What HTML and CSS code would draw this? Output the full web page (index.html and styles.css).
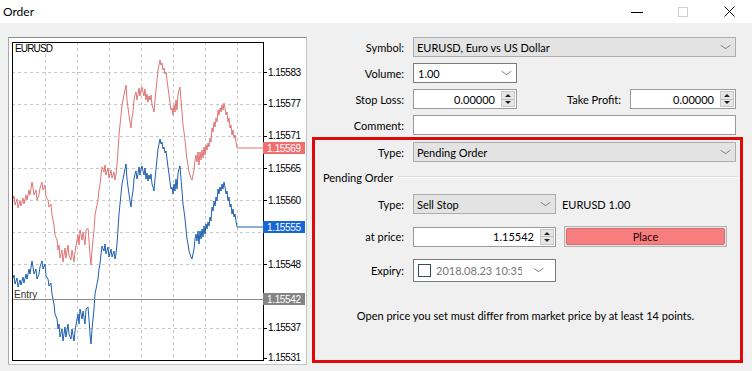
FILE: index.html
```html
<!DOCTYPE html>
<html>
<head>
    <title>Order</title>
    <link rel="stylesheet" href="styles.css">
</head>
<body>

<!-- Window title bar -->
<div class="titleBar">
    <span class="titleText">Order</span>
    <div class="winButtons">
        <span class="winBtn"><svg width="12" height="10" viewBox="0 0 12 10"><path d="M0 5.5 H12" stroke="#000" stroke-width="1"/></svg></span>
        <span class="winBtn"><svg width="10" height="10" viewBox="0 0 10 10"><rect x="0.5" y="0.5" width="9" height="9" fill="none" stroke="#cfcfcf"/></svg></span>
        <span class="winBtn"><svg width="11" height="11" viewBox="0 0 11 11"><path d="M0.5 0.5 L10.5 10.5 M10.5 0.5 L0.5 10.5" stroke="#000" stroke-width="1"/></svg></span>
    </div>
</div>

<div class="main">

    <!-- Tick chart -->
    <div class="chartPanel">
        <svg class="chart" width="297" height="326" viewBox="9 38 297 326">
            <defs>
                <clipPath id="plotArea"><rect x="12" y="42" width="251" height="318"/></clipPath>
                <polyline id="tickPath" fill="none" points="12,202 14,196 15,205 17,199 18,208 20,201 21,206 23,198 24,204 26,195 27,200 29,190 30,195 32,182 33,188 34,195 36,190 37,200 39,195 40,188 42,182 43,190 45,185 46,197 48,200 49,207 51,204 52,215 54,225 55,235 57,240 58,250 59,245 60,258 62,250 63,262 65,248 66,258 68,245 69,255 71,260 72,250 74,262 75,252 77,240 78,235 79,245 80,230 82,240 83,232 85,245 86,230 88,228 89,240 90,255 91,265 92,250 94,230 95,215 97,205 98,200 99,190 100,185 101,175 102,167 104,172 105,165 106,175 108,168 109,178 111,170 112,178 114,172 115,180 116,175 117,165 118,150 119,135 120,125 121,115 122,105 124,95 125,90 126,85 127,100 128,108 129,115 130,122 131,128 132,118 133,112 134,100 135,95 136,92 137,100 138,95 139,88 140,96 141,90 142,87 143,92 144,96 145,89 146,100 147,94 148,102 149,96 150,100 151,95 152,105 153,108 154,112 155,100 156,90 157,80 158,70 159,65 160,60 161,65 162,63 163,70 164,68 165,74 166,72 167,80 168,88 169,95 170,103 171,110 172,108 173,115 174,105 175,112 176,100 177,110 178,95 179,90 180,87 181,100 182,112 183,125 184,132 185,140 186,150 187,160 188,165 189,172 190,175 191,178 192,180 193,175 194,170 195,160 196,155 197,162 198,152 199,165 200,152 201,160 202,150 203,158 204,147 205,155 206,145 207,150 208,143 209,147 210,138 211,142 212,128 213,132 214,122 215,127 216,118 217,122 218,110 219,115 220,108 221,112 222,105 223,110 224,103 225,108 226,115 227,112 228,122 229,118 230,128 231,125 232,135 233,130 234,138 235,135 236,142 237,148 263,148"/>
            </defs>

            <!-- grid -->
            <g class="grid">
                <path d="M12 72.5 H263 M12 104.5 H263 M12 136.5 H263 M12 168.5 H263 M12 200.5 H263 M12 232.5 H263 M12 264.5 H263 M12 328.5 H263"/>
                <path d="M45.5 42 V360 M77.5 42 V360 M109.5 42 V360 M141.5 42 V360 M173.5 42 V360 M205.5 42 V360 M237.5 42 V360"/>
            </g>

            <!-- price lines -->
            <g clip-path="url(#plotArea)">
                <use href="#tickPath" class="askLine"/>
                <use href="#tickPath" class="bidLine" transform="translate(0,79)"/>
            </g>

            <!-- entry level -->
            <path class="entryLine" d="M12 299.5 H263"/>
            <text class="entryText" x="14" y="298">Entry</text>

            <rect class="frame" x="12.5" y="42.5" width="251" height="318"/>
            <text class="symbolText" x="15" y="52" textLength="38">EURUSD</text>

            <!-- price scale -->
            <path class="ticks" d="M263 72.5 h4 M263 104.5 h4 M263 136.5 h4 M263 168.5 h4 M263 200.5 h4 M263 232.5 h4 M263 264.5 h4 M263 328.5 h4 M263 358.5 h4"/>
            <g class="scaleText">
                <text x="268" y="76" textLength="33">1.15583</text>
                <text x="268" y="107" textLength="33">1.15577</text>
                <text x="268" y="139" textLength="33">1.15571</text>
                <text x="268" y="172" textLength="33">1.15565</text>
                <text x="268" y="204" textLength="33">1.15560</text>
                <text x="268" y="268" textLength="33">1.15548</text>
                <text x="268" y="331" textLength="33">1.15537</text>
                <text x="268" y="361" textLength="33">1.15531</text>
            </g>
            <rect class="askTag" x="263" y="142" width="42" height="12"/>
            <text class="tagText" x="267" y="152" textLength="34">1.15569</text>
            <rect class="bidTag" x="263" y="221" width="42" height="12"/>
            <text class="tagText" x="267" y="231" textLength="34">1.15555</text>
            <rect class="entryTag" x="263" y="293" width="42" height="12"/>
            <text class="tagText" x="267" y="303" textLength="34">1.15542</text>
        </svg>
    </div>

    <!-- Order form -->
    <div class="orderForm">
        <div class="row">
            <span class="lbl">Symbol:</span>
            <div class="combo greyCombo fullWidth"><span class="comboText">EURUSD, Euro vs US Dollar</span><span class="chev"></span></div>
        </div>
        <div class="row">
            <span class="lbl">Volume:</span>
            <div class="combo whiteCombo shortWidth"><span class="comboText volText">1.00</span><span class="chev"></span></div>
        </div>
        <div class="row">
            <span class="lbl">Stop Loss:</span>
            <div class="spinField shortWidth"><span class="spinValue">0.00000</span><span class="spinner"></span></div>
            <span class="lbl fillLbl">Take Profit:</span>
            <div class="spinField profitWidth"><span class="spinValue">0.00000</span><span class="spinner"></span></div>
        </div>
        <div class="row commentRow">
            <span class="lbl">Comment:</span>
            <div class="textBox fullWidth"></div>
        </div>

        <!-- highlighted pending order part -->
        <div class="pendingBox">
            <div class="row">
                <span class="lbl">Type:</span>
                <div class="combo greyCombo fullWidth"><span class="comboText">Pending Order</span><span class="chev"></span></div>
            </div>
            <div class="groupHead">
                <span>Pending Order</span>
                <span class="groupLine"></span>
            </div>
            <div class="row sellRow">
                <span class="lbl">Type:</span>
                <div class="combo greyCombo midWidth"><span class="comboText">Sell Stop</span><span class="chev"></span></div>
                <span class="symbolInfo">EURUSD 1.00</span>
            </div>
            <div class="row priceRow">
                <span class="lbl">at price:</span>
                <div class="spinField midWidth"><span class="spinValue">1.15542</span><span class="spinner"></span></div>
                <button class="placeButton"><span>Place</span></button>
            </div>
            <div class="row expiryRow">
                <span class="lbl">Expiry:</span>
                <div class="dateBox midWidth">
                    <span class="checkBox"></span>
                    <span class="dateText">2018.08.23 10:35</span>
                    <span class="chev"></span>
                </div>
            </div>
            <p class="notice">Open price you set must differ from market price by at least 14 points.</p>
        </div>
    </div>
</div>

</body>
</html>
```

FILE: styles.css
```css
/* General Styles */
body {
    margin: 0;
    width: 752px;
    height: 371px;
    overflow: hidden;
    background-color: #f0f0f0;
    font-family: Lato, "Open Sans", sans-serif;
    font-size: 11px;
    color: #000;
}

/* Title Bar */
.titleBar {
    height: 23px;
    background-color: #fff;
    display: flex;
    align-items: center;
}

.titleText {
    padding-left: 3px;
    font-size: 12px;
}

.winButtons {
    margin-left: auto;
    display: flex;
    height: 23px;
}

.winBtn {
    width: 46px;
    display: flex;
    align-items: center;
    justify-content: center;
}

.main {
    display: flex;
    align-items: flex-start;
    padding: 14px 0 0 8px;
}

/* Chart */
.chartPanel {
    width: 297px;
    height: 326px;
    background-color: #fff;
    border: 1px solid #c4c4c4;
    border-top-color: #8c8c8c;
    border-left-color: #a8a8a8;
}

.chart {
    display: block;
    font-family: "Liberation Sans", Arial, sans-serif;
}

.grid path {
    stroke: #c8c8c8;
    stroke-width: 1;
    stroke-dasharray: 3 3;
    fill: none;
}

.askLine {
    stroke: #e07575;
    stroke-width: 1;
}

.bidLine {
    stroke: #1d5fae;
    stroke-width: 1;
}

.frame {
    fill: none;
    stroke: #000;
    stroke-width: 1;
}

.entryLine {
    stroke: #8a8a8a;
    stroke-width: 1;
}

.entryText {
    font-size: 10px;
    fill: #333;
}

.symbolText {
    font-size: 10px;
    fill: #000;
}

.ticks {
    stroke: #000;
    stroke-width: 1;
}

.scaleText text {
    font-size: 10px;
    fill: #000;
}

.askTag {
    fill: #ef6e6e;
}

.bidTag {
    fill: #1766d6;
}

.entryTag {
    fill: #858585;
}

.tagText {
    font-size: 10px;
    fill: #fff;
}

/* Order Form */
.orderForm {
    margin-left: 5px;
    width: 431px;
    display: flex;
    flex-direction: column;
}

.row {
    display: flex;
    align-items: center;
    height: 20px;
    margin-bottom: 6px;
}

.commentRow {
    margin-bottom: 2px;
}

.lbl {
    width: 92px;
    margin-right: 9px;
    text-align: right;
    flex-shrink: 0;
}

.fillLbl {
    width: auto;
    flex: 1;
}

.fullWidth {
    width: 323px;
}

.shortWidth {
    width: 104px;
}

.profitWidth {
    width: 106px;
    margin-right: 7px;
}

.midWidth {
    width: 143px;
}

.combo,
.spinField,
.textBox,
.dateBox {
    box-sizing: border-box;
    height: 20px;
    display: flex;
    align-items: center;
    flex-shrink: 0;
}

.greyCombo {
    background-color: #e3e3e3;
    border: 1px solid #adadad;
}

.whiteCombo,
.textBox,
.spinField,
.dateBox {
    background-color: #fff;
    border: 1px solid #7a7a7a;
}

.textBox,
.spinField {
    border-color: #9a9a9a;
}

.comboText {
    flex: 1;
    padding-left: 3px;
    white-space: nowrap;
}

.volText {
    padding-left: 4px;
}

/* small dropdown chevron */
.chev {
    width: 8px;
    height: 8px;
    margin: 0 5px 4px 0;
    border-right: 1px solid #777;
    border-bottom: 1px solid #777;
    transform: scale(0.8, 0.55) rotate(45deg);
}

.spinValue {
    flex: 1;
    text-align: right;
    padding-right: 6px;
}

.spinner {
    box-sizing: border-box;
    width: 14px;
    height: 16px;
    margin-right: 1px;
    border: 1px solid #c8c8c8;
    background:
        linear-gradient(#bdbdbd, #bdbdbd) center / 100% 1px no-repeat,
        #e6e6e6;
    position: relative;
}

.spinner::before,
.spinner::after {
    content: "";
    position: absolute;
    left: 3px;
    border-left: 3px solid transparent;
    border-right: 3px solid transparent;
}

.spinner::before {
    top: 2px;
    border-bottom: 3px solid #222;
}

.spinner::after {
    bottom: 2px;
    border-top: 3px solid #222;
}

/* Pending order box */
.pendingBox {
    height: 226px;
    box-sizing: border-box;
    border: 3px solid #dc0a0a;
    padding: 2px 4px 0 0;
}

.pendingBox .lbl {
    width: 89px;
}

.pendingBox .row {
    margin-bottom: 0;
}

.groupHead {
    display: flex;
    align-items: center;
    height: 18px;
    margin-top: 6px;
    padding-left: 8px;
}

.groupLine {
    flex: 1;
    margin-left: 5px;
    margin-right: -1px;
    border-top: 1px solid #dcdcdc;
    border-bottom: 1px solid #fff;
}

.sellRow {
    margin-top: 8px;
}

.symbolInfo {
    margin-left: 6px;
}

.priceRow {
    margin-top: 12px;
    height: 21px;
}

.placeButton {
    margin-left: 8px;
    width: 163px;
    height: 21px;
    padding: 1px;
    border: 1px solid #b4b4b4;
    background-color: #e6e6e6;
    font: inherit;
    display: flex;
}

.placeButton span {
    flex: 1;
    background-color: #f77e7e;
    border: 1px solid #d76a6a;
    border-radius: 2px;
    color: #2a0000;
    display: flex;
    align-items: center;
    justify-content: center;
}

.expiryRow {
    margin-top: 12px;
    height: 23px;
}

.dateBox {
    height: 23px;
}

.checkBox {
    box-sizing: border-box;
    width: 13px;
    height: 13px;
    margin-left: 4px;
    border: 1px solid #2b4e63;
    background-color: #fff;
}

.dateText {
    width: 86px;
    margin-left: 5px;
    color: #777;
    overflow: hidden;
    white-space: nowrap;
}

.dateBox .chev {
    margin-left: auto;
    margin-right: 12px;
}

.notice {
    margin: 26px 0 0 0;
    text-align: center;
    line-height: 16px;
}
```
